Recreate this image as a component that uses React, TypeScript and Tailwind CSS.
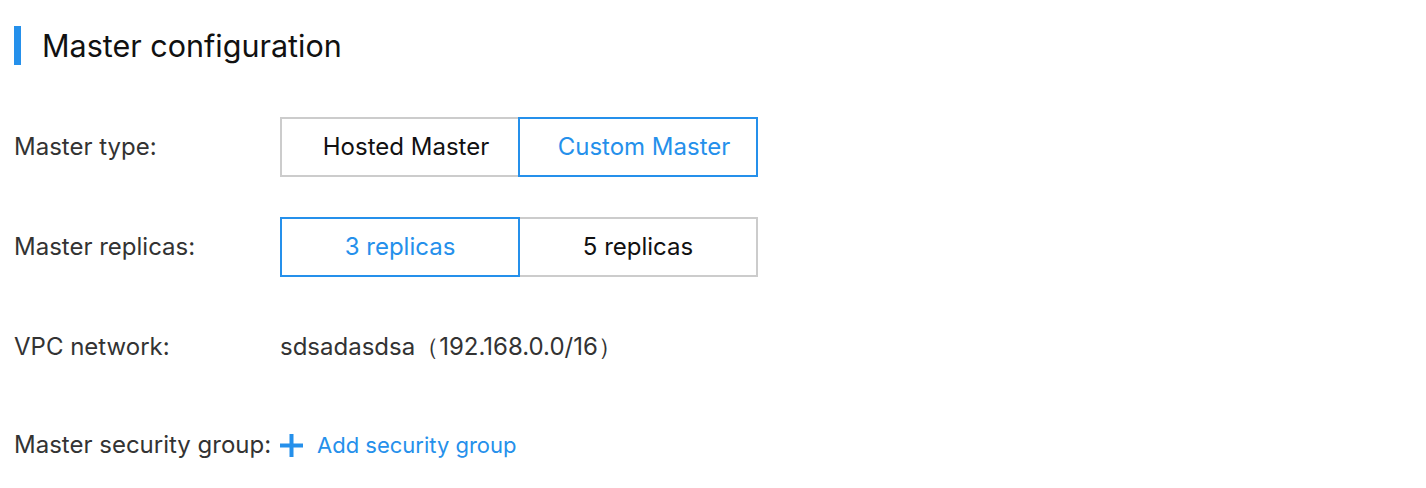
import React from 'react'

const font = { fontFamily: 'Inter, "Noto Sans", sans-serif' }

interface SegmentProps {
  options: string[]
  active: number
  shift?: boolean
}

function Segment({ options, active, shift }: SegmentProps) {
  return (
    <div className="flex">
      {options.map((opt, i) => (
        <div
          key={opt}
          className={
            'relative flex h-[60px] w-[240px] items-center justify-center border-2 text-[24px] ' +
            (i > 0 ? '-ml-[2px] ' : '') +
            (shift ? 'pl-[12px] ' : '') +
            (i === active
              ? 'z-10 border-[#2590eb] text-[#2590eb]'
              : 'border-[#cccccc] text-[#111111]')
          }
        >
          {opt}
        </div>
      ))}
    </div>
  )
}

function Row({ label, children }: { label: string; children: React.ReactNode }) {
  return (
    <div className="flex h-[60px] items-center">
      <div className="w-[266px] shrink-0 text-[24px] text-[#333333]">{label}</div>
      {children}
    </div>
  )
}

export default function App() {
  return (
    <div className="h-[488px] w-[1426px] bg-white pl-[14px] pt-[26px]" style={font}>
      <div className="flex items-center">
        <div className="h-[39px] w-[7px] bg-[#2590eb]" />
        <h2 className="ml-[21px] text-[30.5px] leading-[39px] text-[#111111]">Master configuration</h2>
      </div>

      <div className="mt-[52px] flex flex-col gap-[40px]">
        <Row label="Master type:">
          <Segment options={['Hosted Master', 'Custom Master']} active={1} shift />
        </Row>
        <Row label="Master replicas:">
          <Segment options={['3 replicas', '5 replicas']} active={0} />
        </Row>
        <Row label="VPC network:">
          <span className="text-[24px] text-[#333333]">sdsadasdsa（192.168.0.0/16）</span>
        </Row>
        <div className="-mt-[2px]">
          <Row label="Master security group:">
            <div className="flex items-center text-[22px] text-[#2590eb]">
              <svg width="23" height="23" viewBox="0 0 23 23" className="mr-[14px]">
                <rect x="9.5" y="0" width="4" height="23" fill="#2590eb" />
                <rect x="0" y="9.5" width="23" height="4" fill="#2590eb" />
              </svg>
              Add security group
            </div>
          </Row>
        </div>
      </div>
    </div>
  )
}
